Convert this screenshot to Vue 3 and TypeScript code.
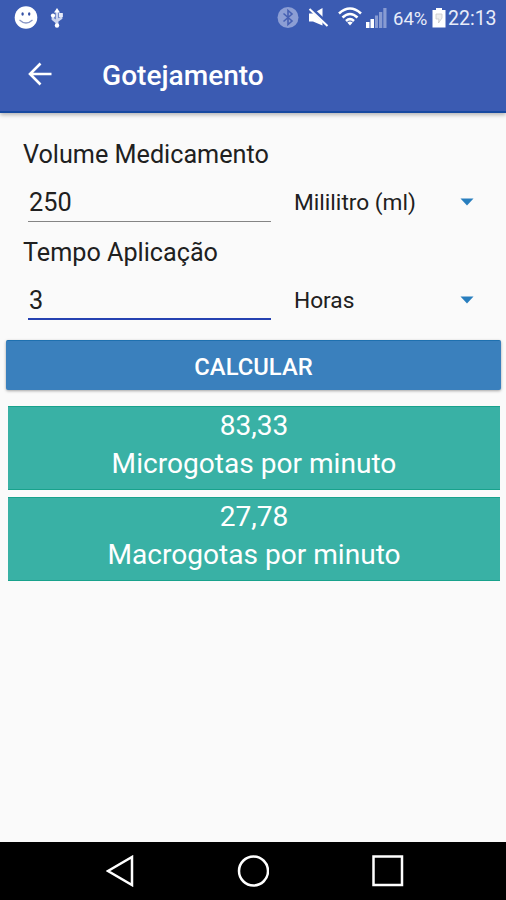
<script setup lang="ts">
import { computed, ref } from 'vue'

const volume = ref('250')
const time = ref('3')

const format = (value: number): string => value.toFixed(2).replace('.', ',')
const micro = computed(() => Number(volume.value) / Number(time.value))
const results = computed(() => [
  { label: 'Microgotas por minuto', value: format(micro.value) },
  { label: 'Macrogotas por minuto', value: format(micro.value / 3) },
])
</script>

<template>
  <div class="screen">
    <header class="header">
      <div class="status">
        <svg class="smile" width="24" height="24" viewBox="0 0 24 24">
          <circle cx="12" cy="11.500" r="11.300" fill="#fff" />
          <ellipse cx="8.600" cy="8" rx="1.200" ry="1.700" fill="#3450a5" />
          <ellipse cx="15.200" cy="8" rx="1.200" ry="1.700" fill="#3450a5" />
          <path d="M5.500 14Q12 20 18.500 14" fill="none" stroke="#8896c5" stroke-width="1.200" />
        </svg>
        <svg class="usb" width="14" height="20" viewBox="0 0 14 20">
          <path d="M7 3V17M7 14.500L3 11V7M7 13L11 10V6" fill="none" stroke="#cbd4ee" stroke-width="2.800" />
          <path d="M7 0L10 4.500H4Z" fill="#fff" />
          <circle cx="3" cy="7.500" r="2.100" fill="#fff" />
          <rect x="9" y="5" width="3.800" height="4" fill="#e6eaf8" />
          <circle cx="7" cy="17.500" r="2.200" fill="#fff" />
        </svg>
        <span class="spacer"></span>
        <svg class="bluetooth" width="22" height="22" viewBox="0 0 22 22">
          <circle cx="11" cy="10.500" r="10.500" fill="#8c9ed4" />
          <path d="M6.500 6.500L15 14L11 17.500V3.500L15 7L6.500 14.500" fill="none" stroke="#4660b2" stroke-width="1.600" />
        </svg>
        <svg class="mute" width="21" height="20" viewBox="0 0 21 20">
          <path d="M1 5.500H5L14.500 0V17.500L5 13.500H1Z" fill="#fff" />
          <path d="M2.500 0L20.500 17" stroke="#3b5bb2" stroke-width="4" />
          <path d="M1.500 1L19.500 18" stroke="#fff" stroke-width="2" />
        </svg>
        <svg class="wifi" width="24" height="19" viewBox="0 0 24 19">
          <path d="M1 6.500Q12-3.500 23 6.500M4.500 10.500Q12 3.500 19.500 10.500M8 14Q12 10.300 16 14" fill="none" stroke="#fff" stroke-width="2.600" />
          <path d="M9.300 15.500Q12 13.300 14.700 15.500L12 18.500Z" fill="#fff" />
        </svg>
        <svg class="signal" width="21" height="20" viewBox="0 0 21 20">
          <path d="M0 14H3.500V20H0ZM4.500 11H8V20H4.500Z" fill="#fff" />
          <path d="M9 7.500H12V20H9ZM13 4H16.300V20H13ZM17.300 0H20.500V20H17.300Z" fill="#889bd2" />
        </svg>
        <span class="percent">64%</span>
        <svg class="battery" width="14" height="20" viewBox="0 0 14 20">
          <path d="M4 0H10V2H13.500V19.500H.5V2H4Z" fill="#fff" />
          <path d="M4 6H10V10L6.500 15L7 11H4Z" fill="#eee" stroke="#c8c8c8" stroke-width=".8" />
        </svg>
        <span class="clock">22:13</span>
      </div>
      <div class="toolbar">
        <svg class="back" width="24" height="24" viewBox="0 0 24 24">
          <path d="M23.500 12H2M12.500 1.500L2 12L12.500 22.500" fill="none" stroke="#fff" stroke-width="2.600" />
        </svg>
        <h1 class="title">Gotejamento</h1>
      </div>
    </header>

    <main class="content">
      <label class="label" for="volume">Volume Medicamento</label>
      <div class="row">
        <input id="volume" v-model="volume" class="field" type="text" />
        <div class="select">
          <span>Mililitro (ml)</span>
          <svg width="14" height="8" viewBox="0 0 14 8"><path d="M.5.500H13.500L7 7.500Z" fill="#287ebe" /></svg>
        </div>
      </div>
      <label class="label time-label" for="time">Tempo Aplicação</label>
      <div class="row">
        <input id="time" v-model="time" class="field active" type="text" />
        <div class="select">
          <span>Horas</span>
          <svg width="14" height="8" viewBox="0 0 14 8"><path d="M.5.500H13.500L7 7.500Z" fill="#287ebe" /></svg>
        </div>
      </div>
      <button class="calculate" type="button">CALCULAR</button>
      <section class="results">
        <div v-for="result in results" :key="result.label" class="result">
          <div>{{ result.value }}</div>
          <div>{{ result.label }}</div>
        </div>
      </section>
    </main>

    <nav class="nav">
      <svg width="28" height="32" viewBox="0 0 28 32"><path d="M26 2V30L2 16Z" fill="none" stroke="#fff" stroke-width="2.500" /></svg>
      <svg width="32" height="32" viewBox="0 0 32 32"><circle cx="16.500" cy="16" r="14.500" fill="none" stroke="#fff" stroke-width="2.500" /></svg>
      <svg width="32" height="32" viewBox="0 0 32 32"><rect x="1.500" y="1.500" width="28.500" height="28.500" fill="none" stroke="#fff" stroke-width="2.500" /></svg>
    </nav>
  </div>
</template>

<style>
body {
  margin: 0;
}
</style>

<style scoped>
.screen {
  display: flex;
  flex-direction: column;
  width: 506px;
  height: 900px;
  overflow: hidden;
  background: #fafafa;
  color: #202020;
  font-family: Roboto, sans-serif;
}
svg {
  display: block;
  flex: none;
}
.header {
  flex: none;
  box-sizing: border-box;
  height: 113px;
  border-bottom: 2px solid #1749a0;
  background: #3b5bb2;
  color: #fff;
  box-shadow: 0 2px 4px rgba(0, 0, 0, 0.28);
}
.status {
  display: flex;
  align-items: center;
  height: 35px;
  padding: 0 9px 0 14px;
}
.usb {
  margin-left: 12px;
}
.spacer {
  flex: 1;
}
.mute {
  margin-left: 9px;
}
.wifi {
  margin-top: -3px;
  margin-left: 9px;
}
.signal {
  margin-left: 4px;
}
.percent,
.clock {
  padding-top: 2px;
  color: #e8ecf9;
  font-size: 19.500px;
  line-height: 36px;
  white-space: nowrap;
}
.percent {
  width: 34px;
  margin-left: 6px;
  font-size: 18.500px;
}
.battery {
  margin-left: 5px;
}
.clock {
  width: 49px;
  margin-left: 2px;
}
.toolbar {
  display: flex;
  align-items: center;
  height: 78px;
  padding-left: 28px;
}
.title {
  margin: 3px 0 0 50px;
  font-size: 28.100px;
  font-weight: 500;
  line-height: 34px;
}
.content {
  display: flex;
  flex: 1;
  flex-direction: column;
  padding: 26px 5px 0 6px;
}
.label {
  height: 31px;
  padding-left: 17px;
  font-size: 25.200px;
  line-height: 32px;
}
.row {
  display: flex;
  height: 52px;
  padding-left: 22px;
}
.time-label {
  margin-top: 15px;
}
.field {
  box-sizing: border-box;
  width: 243px;
  height: 52px;
  padding: 13px 0 0 1px;
  border: 0;
  border-bottom: 1px solid #858585;
  border-radius: 0;
  outline: 0;
  background: transparent;
  color: #202020;
  font: 25.300px/38px Roboto, sans-serif;
}
.active {
  padding-top: 15px;
  border-bottom: 2px solid #2541b1;
}
.select {
  display: flex;
  flex: 1;
  align-items: center;
  justify-content: space-between;
  height: 38px;
  margin: 13px 27px 0 23px;
  font-size: 22.700px;
}
.calculate {
  flex: none;
  height: 50px;
  margin-top: 20px;
  padding: 3px 0 0;
  border: 0;
  border-top: 1px solid #1e70af;
  border-radius: 2px;
  background: #3a80bd;
  box-shadow: 0 1px 3px rgba(0, 0, 0, 0.35);
  color: #fff;
  font: 500 23.800px/46px Roboto, sans-serif;
}
.results {
  display: grid;
  gap: 7px;
  padding: 16px 1px 0 2px;
}
.result {
  box-sizing: border-box;
  height: 84px;
  border-top: 1px solid #18a28c;
  border-bottom: 1px solid #18a28c;
  background: #39b1a5;
  color: #fff;
  font-size: 28.100px;
  line-height: 37.500px;
  text-align: center;
}
.nav {
  display: flex;
  flex: none;
  align-items: center;
  justify-content: space-between;
  box-sizing: border-box;
  height: 58px;
  padding: 0 102px 0 106px;
  background: #000;
}
</style>
